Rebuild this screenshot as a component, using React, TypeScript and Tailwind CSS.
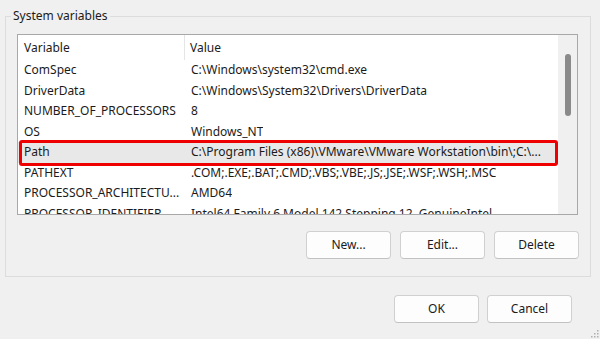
import React from "react";

const rows: [string, string][] = [
  ["ComSpec", "C:\\Windows\\system32\\cmd.exe"],
  ["DriverData", "C:\\Windows\\System32\\Drivers\\DriverData"],
  ["NUMBER_OF_PROCESSORS", "8"],
  ["OS", "Windows_NT"],
  ["Path", "C:\\Program Files (x86)\\VMware\\VMware Workstation\\bin\\;C:\\..."],
  ["PATHEXT", ".COM;.EXE;.BAT;.CMD;.VBS;.VBE;.JS;.JSE;.WSF;.WSH;.MSC"],
  ["PROCESSOR_ARCHITECTU...", "AMD64"],
  ["PROCESSOR_IDENTIFIER", "Intel64 Family 6 Model 142 Stepping 12, GenuineIntel"],
];

function Btn({ label, w, h }: { label: string; w: string; h: string }) {
  return (
    <button
      className={`${w} ${h} rounded-[4px] border border-[#d0d0d0] border-b-[#c2c2c2] bg-[#fdfdfd] text-[12px] text-[#1b1b1b] flex items-center justify-center`}
    >
      {label}
    </button>
  );
}

export default function App() {
  return (
    <div
      className="w-[600px] h-[339px] bg-[#f0f0f0] overflow-hidden relative flex flex-col"
      style={{ fontFamily: '"Noto Sans", "Open Sans", sans-serif' }}
    >
      <fieldset className="ml-[5px] mt-[8px] w-[586px] h-[269px] border border-[#dcdcdc] flex flex-col">
        <legend className="ml-[5px] px-[2px] text-[12px] leading-[16px] text-[#1b1b1b]">
          System variables
        </legend>
        <div className="ml-[11px] mt-[10px] w-[561px] h-[181px] border border-[#a8a8a8] bg-white flex relative overflow-hidden">
          <div className="w-[540px] flex flex-col">
            <div className="h-[25px] flex items-center text-[12px] text-[#1b1b1b] shrink-0">
              <div className="w-[167px] pl-[6px] h-full flex items-center border-r border-[#e5e5e5] my-[1px]">
                Variable
              </div>
              <div className="pl-[5px]">Value</div>
            </div>
            {rows.map(([k, v]) => (
              <div
                key={k}
                className={`h-[20.5px] shrink-0 flex items-center text-[12px] text-[#1b1b1b] whitespace-nowrap ${
                  k === "Path" ? "bg-[#e8e8e8]" : ""
                }`}
              >
                <div className="w-[168px] pl-[6px] overflow-hidden">{k}</div>
                <div className="pl-[5px] overflow-hidden">{v}</div>
              </div>
            ))}
          </div>
          <div className="w-[19px] bg-[#f0f0f0] flex justify-center pt-[19px]">
            <div className="w-[6px] h-[62px] rounded-[3px] bg-[#8a8a8a]" />
          </div>
          <div className="absolute left-[1px] top-[105px] w-[539px] h-[26px] border-[3px] border-[#ee0000] rounded-[3px]" />
        </div>
        <div className="mt-[16px] ml-[300px] flex gap-[9px]">
          <Btn label="New..." w="w-[85px]" h="h-[28px]" />
          <Btn label="Edit..." w="w-[85px]" h="h-[28px]" />
          <Btn label="Delete" w="w-[85px]" h="h-[28px]" />
        </div>
      </fieldset>
      <div className="mt-[18px] ml-[394px] flex gap-[8px]">
        <Btn label="OK" w="w-[85px]" h="h-[28px]" />
        <Btn label="Cancel" w="w-[85px]" h="h-[28px]" />
      </div>
      <svg className="absolute right-[1px] bottom-[1px]" width="8" height="8" viewBox="0 0 8 8">
        <rect x="6" y="0" width="1.5" height="1.5" fill="#b0b0b0" />
        <rect x="3" y="3" width="1.5" height="1.5" fill="#b0b0b0" />
        <rect x="6" y="3" width="1.5" height="1.5" fill="#b0b0b0" />
        <rect x="0" y="6" width="1.5" height="1.5" fill="#b0b0b0" />
        <rect x="3" y="6" width="1.5" height="1.5" fill="#b0b0b0" />
        <rect x="6" y="6" width="1.5" height="1.5" fill="#b0b0b0" />
      </svg>
    </div>
  );
}
